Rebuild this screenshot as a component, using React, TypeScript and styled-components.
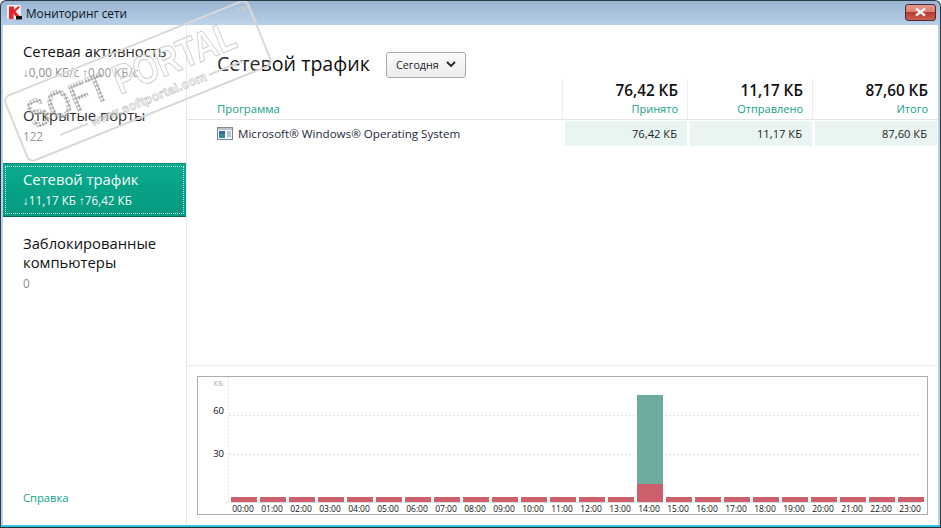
import React from "react";
import styled, { createGlobalStyle } from "styled-components";

const Global = createGlobalStyle`
  html, body { margin: 0; padding: 0; background: #fff; overflow: hidden; }
  * { box-sizing: border-box; }
  body { font-family: "Open Sans", "Noto Sans", sans-serif; }
`;

const Window = styled.div`
  position: relative;
  width: 941px;
  height: 528px;
  display: flex;
  flex-direction: column;
  overflow: hidden;
  background: linear-gradient(180deg, #9ab5d1 0%, #b9d1ea 26px);
  border: 1px solid #2b3a48;
  border-bottom-color: #1f2f3c;
  border-radius: 6px 6px 0 0;
`;

const TitleBar = styled.div`
  height: 24px;
  flex: none;
  display: flex;
  align-items: center;
  padding: 0 4px 0 6px;
  gap: 3px;
`;

const TitleText = styled.div`
  flex: 1;
  font-family: "Open Sans", sans-serif;
  font-size: 11.8px;
  color: #0c1420;
`;

const CloseButton = styled.div`
  width: 31px;
  height: 17px;
  margin-top: -2px;
  border: 1px solid #4d2a35;
  border-radius: 3px;
  background: linear-gradient(180deg, #e39a8e 0%, #d8806f 45%, #b8392c 50%, #c9604f 100%);
  display: flex;
  align-items: center;
  justify-content: center;
`;

const Client = styled.div`
  flex: 1;
  display: flex;
  margin: 0 2px 0 2px;
  background: #fff;
  min-height: 0;
  border-bottom: 1px solid #fff;
`;

const BottomStripe = styled.div`
  height: 2px;
  flex: none;
  background: #2fc4e2;
  margin: 0 -1px;
`;

const Sidebar = styled.nav`
  width: 184px;
  flex: none;
  border-right: 1px solid #dcecec;
  display: flex;
  flex-direction: column;
  padding-top: 11px;
`;

const NavItem = styled.div<{ $active?: boolean }>`
  position: relative;
  padding: ${(p) => (p.$active ? "6px 0 6px 20px" : "6px 0 0 20px")};
  height: ${(p) => (p.$active ? "54px" : "auto")};
  background: ${(p) => (p.$active ? "linear-gradient(180deg, #0cab8f 0%, #06a084 60%, #079a7f 100%)" : "transparent")};
  border-top: ${(p) => (p.$active ? "1px solid #0a8570" : "none")};
  border-bottom: ${(p) => (p.$active ? "1px solid #046b58" : "none")};
  margin-bottom: ${(p) => (p.$active ? "11px" : "0")};
  ${(p) =>
    p.$active
      ? `&::after { content: ""; position: absolute; inset: 2px; border: 1px dotted #cdeee6; pointer-events: none; }`
      : ""}
`;

const NavTitle = styled.div<{ $active?: boolean }>`
  font-size: 14.8px;
  line-height: 19px;
  color: ${(p) => (p.$active ? "#f2fbf9" : "#111")};
`;

const NavSub = styled.div<{ $active?: boolean }>`
  font-size: 11.7px;
  line-height: 16px;
  margin-top: 3px;
  color: ${(p) => (p.$active ? "#f4fcfa" : "#8e8e8e")};
`;

const NavSpacer = styled.div<{ $h: number }>`
  height: ${(p) => p.$h}px;
  flex: none;
`;

const HelpLink = styled.div`
  margin-top: auto;
  padding: 0 0 18px 20px;
  font-size: 11.2px;
  line-height: 16px;
  color: #0fa48b;
`;

const Main = styled.main`
  flex: 1;
  min-width: 0;
  display: flex;
  flex-direction: column;
`;

const Head = styled.div`
  display: flex;
  align-items: center;
  gap: 16px;
  padding: 25px 0 0 30px;
  height: 54px;
  flex: none;
`;

const Title = styled.h1`
  margin: 0 0 1px;
  font-size: 19.6px;
  font-weight: 400;
  line-height: 26px;
  color: #111;
`;

const PeriodButton = styled.div`
  width: 80px;
  height: 26px;
  border: 1px solid #a9a9a9;
  border-radius: 3px;
  background: linear-gradient(180deg, #fbfbfb 0%, #ececec 100%);
  display: flex;
  align-items: center;
  justify-content: center;
  gap: 7px;
  font-size: 10.7px;
  color: #222;
`;

const Columns = styled.div`
  display: grid;
  grid-template-columns: 375px 125px 125px 125px;
  height: 41px;
  flex: none;
  border-bottom: 1px solid #e4e4e4;
`;

const ProgramHead = styled.div`
  padding-left: 30px;
  align-self: end;
  font-size: 11.3px;
  line-height: 16px;
  padding-bottom: 2px;
  color: #14a08a;
`;

const ColumnHead = styled.div`
  border-left: 1px solid #ececec;
  text-align: right;
  padding-right: 9px;
  display: flex;
  flex-direction: column;
  justify-content: flex-end;
  padding-bottom: 2px;
`;

const ColumnValue = styled.div`
  font-size: 15.3px;
  font-weight: 600;
  line-height: 20px;
  color: #111;
`;

const ColumnLabel = styled.div`
  font-size: 11px;
  line-height: 16px;
  color: #14a08a;
  margin-top: 1px;
`;

const Row = styled.div`
  display: grid;
  grid-template-columns: 378px 122px 3px 122px 3px 122px;
  height: 25px;
  margin-top: 1px;
  flex: none;
`;

const ProgramCell = styled.div`
  display: flex;
  align-items: center;
  gap: 5px;
  padding: 0 0 1px 30px;
  font-size: 11.6px;
  color: #1c2a3a;
`;

const ValueCell = styled.div`
  background: #e9f5f3;
  display: flex;
  align-items: center;
  justify-content: flex-end;
  padding-right: 10px;
  font-size: 11.2px;
  color: #222;
`;

const Gap = styled.div``;

const ChartPane = styled.div`
  margin-top: auto;
  flex: none;
  height: 159px;
  border-top: 1px solid #e6efef;
  padding: 10px 9px 9px 10px;
`;

const ChartBox = styled.div`
  height: 139px;
  border: 1px solid #adadad;
  background: #fff;
  width: 731px;
`;

const ChartSvg = styled.svg`
  display: block;
`;

const Stamp = styled.div`
  position: absolute;
  left: 1px;
  top: 96px;
  width: 264px;
  height: 72px;
  transform: rotate(-22deg);
  transform-origin: 0 0;
  pointer-events: none;
  border: 2px solid #d9d9d9;
  border-radius: 7px;
  background: rgba(255, 255, 255, 0.1);
`;

const StampBig = styled.div`
  position: absolute;
  left: 15px;
  top: 1px;
  display: flex;
  gap: 11px;
  font-family: "Liberation Sans", sans-serif;
  font-size: 41px;
  line-height: 50px;
  font-weight: 700;
  white-space: nowrap;
  transform: scaleX(0.775);
  transform-origin: 0 0;
`;

const StampSoft = styled.span`
  color: transparent;
  background-image: radial-gradient(circle, #a6a6a6 1.5px, transparent 1.7px);
  background-size: 4px 4px;
  -webkit-background-clip: text;
  background-clip: text;
`;

const StampPortal = styled.span`
  color: rgba(255, 255, 255, 0.2);
  -webkit-text-stroke: 1px #cdcdcd;
`;

const StampLine = styled.div<{ $w: number }>`
  flex: none;
  width: ${(p) => p.$w}px;
  height: 2px;
  background: #d8d8d8;
`;

const StampFoot = styled.div`
  position: absolute;
  left: 38px;
  top: 47px;
  height: 16px;
  display: flex;
  align-items: center;
  gap: 3px;
`;

const StampSmall = styled.div`
  font-family: "Liberation Sans", sans-serif;
  font-size: 12.5px;
  font-weight: 700;
  letter-spacing: 0.3px;
  white-space: nowrap;
  color: rgba(255, 255, 255, 0.35);
  -webkit-text-stroke: 0.6px #bdbdbd;
`;

const StampTm = styled.div`
  position: absolute;
  left: 247px;
  top: 2px;
  font-family: "Liberation Sans", sans-serif;
  font-size: 9px;
  color: #cfcfcf;
`;

const KasperskyIcon = () => (
  <svg width="16" height="16" viewBox="0 0 16 16">
    <rect x="0" y="0" width="14" height="14" fill="#f2f0f0" />
    <path d="M2 1.5h5v3l4-3h2.5L8.5 6.5 13 11.5H9L6.5 9v5H2z" fill="#e6262a" />
    <rect x="9" y="11" width="6" height="3.5" fill="#161616" />
  </svg>
);

const AppIcon = () => (
  <svg width="16" height="13" viewBox="0 0 16 13">
    <rect x="0.5" y="0.5" width="15" height="12" fill="#f2f5f8" stroke="#7d8790" />
    <rect x="1" y="1" width="14" height="2" fill="#b9c4cf" />
    <rect x="2" y="4" width="6" height="7" fill="#3e8a8f" />
    <rect x="2" y="4" width="6" height="3" fill="#2f6b9c" />
    <path d="M10 5h4M10 7h4M10 9h4" stroke="#8896a3" />
  </svg>
);

const ROWS = [
  { v: "76,42 КБ", l: "Принято" },
  { v: "11,17 КБ", l: "Отправлено" },
  { v: "87,60 КБ", l: "Итого" },
];

const hours = Array.from({ length: 24 }, (_, i) => `${String(i).padStart(2, "0")}:00`);

const Chart = () => (
  <ChartSvg width="729" height="137" viewBox="0 0 729 137">
    <text x="25" y="9" textAnchor="end" fontSize="7.5" fill="#a5a5a5" fontFamily="Open Sans">КБ</text>
    <line x1="30.5" y1="0" x2="30.5" y2="125" stroke="#cfcfcf" strokeDasharray="1 3" />
    <line x1="28" y1="125.5" x2="30" y2="125.5" stroke="#cfcfcf" />
    <line x1="31" y1="38.5" x2="721" y2="38.5" stroke="#e0e0e0" strokeDasharray="2 2" />
    <line x1="31" y1="77.5" x2="721" y2="77.5" stroke="#e0e0e0" strokeDasharray="2 2" />
    <text x="26" y="37" textAnchor="end" fontSize="9.5" fill="#111" fontFamily="Open Sans">60</text>
    <text x="26" y="80" textAnchor="end" fontSize="9.5" fill="#111" fontFamily="Open Sans">30</text>
    <line x1="33" y1="125.5" x2="723" y2="125.5" stroke="#dadada" />
    {hours.map((h, i) => {
      const x = 33 + i * 29;
      return (
        <g key={h}>
          {i === 14 ? (
            <>
              <rect x={x} y={18} width={26} height={89} fill="#6fab9f" />
              <rect x={x} y={107} width={26} height={18} fill="#cc5f6c" />
            </>
          ) : (
            <rect x={x} y={120} width={26} height={5} fill="#cc5f6c" />
          )}
          <text x={x + 12} y={135} textAnchor="middle" fontSize="8.5" fill="#111" fontFamily="Open Sans">
            {h}
          </text>
        </g>
      );
    })}
  </ChartSvg>
);

export default function App() {
  return (
    <>
      <Global />
      <Window>
        <TitleBar>
          <KasperskyIcon />
          <TitleText>Мониторинг сети</TitleText>
          <CloseButton>
            <svg width="13" height="10" viewBox="0 0 13 10">
              <path d="M2 1.5l9 7M11 1.5l-9 7" stroke="#f4efee" strokeWidth="2.6" />
            </svg>
          </CloseButton>
        </TitleBar>
        <Client>
          <Sidebar>
            <NavItem>
              <NavTitle>Сетевая активность</NavTitle>
              <NavSub>↓0,00 КБ/с ↑0,00 КБ/с</NavSub>
            </NavItem>
            <NavSpacer $h={20} />
            <NavItem>
              <NavTitle>Открытые порты</NavTitle>
              <NavSub>122</NavSub>
            </NavItem>
            <NavSpacer $h={19} />
            <NavItem $active>
              <NavTitle $active>Сетевой трафик</NavTitle>
              <NavSub $active>↓11,17 КБ ↑76,42 КБ</NavSub>
            </NavItem>
            <NavItem>
              <NavTitle>
                Заблокированные
                <br />
                компьютеры
              </NavTitle>
              <NavSub>0</NavSub>
            </NavItem>
            <HelpLink>Справка</HelpLink>
          </Sidebar>
          <Main>
            <Head>
              <Title>Сетевой трафик</Title>
              <PeriodButton>
                Сегодня
                <svg width="10" height="7" viewBox="0 0 10 7">
                  <path d="M1 1l4 4 4-4" fill="none" stroke="#222" strokeWidth="1.8" />
                </svg>
              </PeriodButton>
            </Head>
            <Columns>
              <ProgramHead>Программа</ProgramHead>
              {ROWS.map((r) => (
                <ColumnHead key={r.l}>
                  <ColumnValue>{r.v}</ColumnValue>
                  <ColumnLabel>{r.l}</ColumnLabel>
                </ColumnHead>
              ))}
            </Columns>
            <Row>
              <ProgramCell>
                <AppIcon />
                Microsoft® Windows® Operating System
              </ProgramCell>
              <ValueCell>76,42 КБ</ValueCell>
              <Gap />
              <ValueCell>11,17 КБ</ValueCell>
              <Gap />
              <ValueCell>87,60 КБ</ValueCell>
            </Row>
            <ChartPane>
              <ChartBox>
                <Chart />
              </ChartBox>
            </ChartPane>
          </Main>
        </Client>
        <BottomStripe />
        <Stamp>
          <StampBig>
            <StampSoft>SOFT</StampSoft>
            <StampPortal>PORTAL</StampPortal>
          </StampBig>
          <StampFoot>
            <StampLine $w={30} />
            <StampSmall>www.softportal.com</StampSmall>
            <StampLine $w={38} />
          </StampFoot>
          <StampTm>TM</StampTm>
        </Stamp>
      </Window>
    </>
  );
}
